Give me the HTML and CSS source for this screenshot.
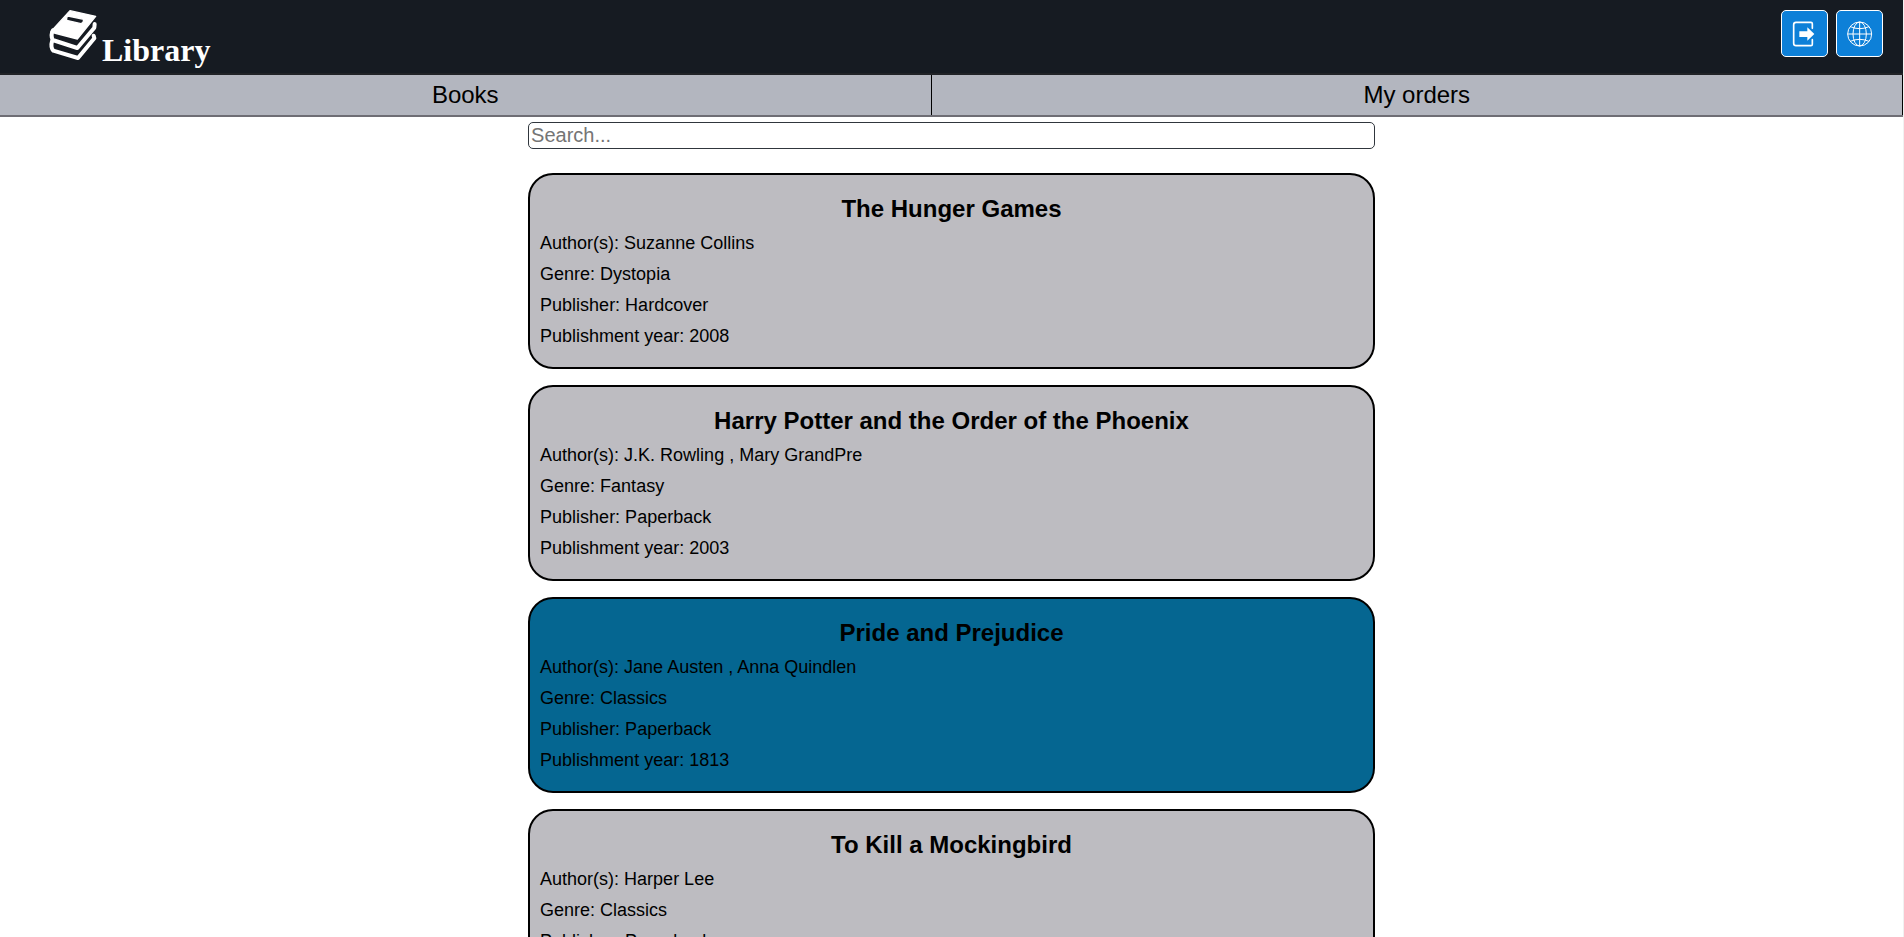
FILE: index.html
```html
<!DOCTYPE html>
<html lang="en">
<head>
<meta charset="utf-8">
<title>Library</title>
<link rel="stylesheet" href="styles.css">
</head>
<body>
<header class="header">
  <a class="logo" href="#">
    <svg class="logo-icon" viewBox="144 24 162 177" aria-hidden="true">
      <path fill="#fff" fill-rule="evenodd" stroke="#fff" stroke-width="4" stroke-linejoin="round" d="M210 32L287 49L232 117L163 99L153 94ZM204 48Q199 50 200 61L243 71Q251 69 251 58Z"/>
      <g fill="none" stroke="#fff" stroke-linejoin="round" stroke-linecap="round">
        <path stroke-width="12" d="M159 91Q151 105 158 120L232 144L283 83L284 72"/>
        <path stroke-width="12" d="M156 124Q151 141 160 152L234 174L283 115L281 107"/>
      </g>
    </svg>
    <span class="logo-text">Library</span>
  </a>
  <div class="actions">
    <button class="icon-button" type="button" aria-label="Log out">
      <svg viewBox="0 0 78 78" aria-hidden="true">
        <path fill="none" stroke="#fff" stroke-width="5" stroke-linejoin="round" stroke-linecap="round" d="M61 22V8Q61 4 57 4H12Q5 4 5 11V67Q5 74 12 74H57Q61 74 61 70V56"/>
        <path fill="#fff" d="M22 31H46V19L67 39L46 59V48H22Z"/>
      </svg>
    </button>
    <button class="icon-button" type="button" aria-label="Language">
      <svg viewBox="0 0 78 78" aria-hidden="true">
        <g fill="none" stroke="#fff" stroke-width="3">
          <circle cx="38" cy="39" r="36"/>
          <ellipse cx="38" cy="39" rx="20" ry="36"/>
          <path d="M38 3V75M2 39H74M10 17Q38 29 66 17M10 61Q38 49 66 61"/>
        </g>
      </svg>
    </button>
  </div>
</header>
<nav class="nav">
  <a class="nav-link" href="#">Books</a>
  <a class="nav-link" href="#">My orders</a>
</nav>
<main class="content">
  <input class="search" type="search" placeholder="Search..." aria-label="Search">
  <section class="books">
    <article class="book">
      <h2 class="book-title">The Hunger Games</h2>
      <p class="book-info">Author(s): Suzanne Collins</p>
      <p class="book-info">Genre: Dystopia</p>
      <p class="book-info">Publisher: Hardcover</p>
      <p class="book-info">Publishment year: 2008</p>
    </article>
    <article class="book">
      <h2 class="book-title">Harry Potter and the Order of the Phoenix</h2>
      <p class="book-info">Author(s): J.K. Rowling , Mary GrandPre</p>
      <p class="book-info">Genre: Fantasy</p>
      <p class="book-info">Publisher: Paperback</p>
      <p class="book-info">Publishment year: 2003</p>
    </article>
    <article class="book book-selected">
      <h2 class="book-title">Pride and Prejudice</h2>
      <p class="book-info">Author(s): Jane Austen , Anna Quindlen</p>
      <p class="book-info">Genre: Classics</p>
      <p class="book-info">Publisher: Paperback</p>
      <p class="book-info">Publishment year: 1813</p>
    </article>
    <article class="book">
      <h2 class="book-title">To Kill a Mockingbird</h2>
      <p class="book-info">Author(s): Harper Lee</p>
      <p class="book-info">Genre: Classics</p>
      <p class="book-info">Publisher: Paperback</p>
    </article>
  </section>
</main>
</body>
</html>
```
FILE: styles.css
```css
* {
  box-sizing: border-box;
}

body {
  margin: 0;
  border-right: 1px solid #f1f1f1;
  background: #fff;
  color: #000;
  font-family: "Liberation Sans", Arial, sans-serif;
}

.header {
  display: flex;
  justify-content: space-between;
  align-items: flex-start;
  padding: 8px 20px 6px 48px;
  border-bottom: 2px solid #212327;
  background: #161b22;
}

.logo {
  display: flex;
  align-items: flex-end;
  color: #fff;
  text-decoration: none;
}

.logo-icon {
  width: 54px;
  height: 59px;
}

.logo-text {
  font: bold 32px/34px "Liberation Serif", "Times New Roman", serif;
}

.actions {
  display: flex;
  gap: 8px;
  padding-top: 2px;
}

.icon-button {
  display: flex;
  align-items: center;
  justify-content: center;
  width: 47px;
  height: 47px;
  padding: 0;
  border: 1px solid #fff;
  border-radius: 5px;
  background: #0d80d8;
  cursor: pointer;
}

.icon-button svg {
  width: 26px;
  height: 26px;
}

.nav {
  display: flex;
  border-bottom: 2px solid #6e6d74;
  background: #b3b6bf;
}

.nav-link {
  flex: 1 1 auto;
  border-right: 1px solid #000;
  color: #000;
  font-size: 24px;
  line-height: 40px;
  text-align: center;
  text-decoration: none;
}

.content {
  width: 44.5%;
  margin: 0 auto;
  padding: 5px 0 16px;
}

.search {
  display: block;
  width: 100%;
  height: 27px;
  padding: 1px 2px;
  border: 1px solid #30363d;
  border-radius: 5px;
  background: #fff;
  font: 20px "Liberation Sans", Arial, sans-serif;
  appearance: none;
}

.search::placeholder {
  color: #757575;
}

.books {
  display: flex;
  flex-direction: column;
  gap: 16px;
  margin-top: 24px;
}

.book {
  padding: 20px 10px;
  border: 2px solid #000;
  border-radius: 25px;
  background: #bdbcc1;
}

.book-selected {
  background: #056691;
}

.book-title {
  margin: 0;
  font-size: 24px;
  line-height: 28px;
  text-align: center;
}

.book-info {
  margin: 10px 0 0;
  font-size: 18px;
  line-height: 21px;
}
```
